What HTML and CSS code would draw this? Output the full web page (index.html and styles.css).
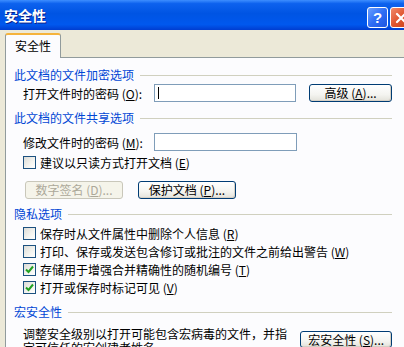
FILE: index.html
```html
<!DOCTYPE html>
<html lang="zh-CN">
<head>
  <meta charset="UTF-8" />
  <title>安全性</title>
  <link rel="stylesheet" href="styles.css">
</head>
<body>

  <div class="window">
    <div class="titlebar">
      <span class="caption">安全性</span>
      <div class="caption-buttons">
        <div class="cap-btn help">?</div>
        <div class="cap-btn close">
          <svg width="14" height="14" viewBox="0 0 14 14"><path d="M3 3 L11 11 M11 3 L3 11" stroke="#fff" stroke-width="2.2" stroke-linecap="round"/></svg>
        </div>
      </div>
    </div>

    <div class="tabs">
      <div class="tab">安全性</div>
    </div>

    <div class="panel">
      <div class="content">

        <div class="group-title g1"><span>此文档的文件加密选项</span><i></i></div>
        <div class="field-row r1">
          <label>打开文件时的密码 (<u>O</u>):</label>
          <div class="textbox"><span class="caret"></span></div>
          <button class="btn adv">高级 (<u>A</u>)...</button>
        </div>

        <div class="group-title g2"><span>此文档的文件共享选项</span><i></i></div>
        <div class="field-row r2">
          <label>修改文件时的密码 (<u>M</u>):</label>
          <div class="textbox"></div>
        </div>
        <div class="check-row first">
          <span class="box"></span>建议以只读方式打开文档 (<u>E</u>)
        </div>
        <div class="button-row">
          <button class="btn disabled">数字签名 (<u>D</u>)...</button>
          <button class="btn">保护文档 (<u>P</u>)...</button>
        </div>

        <div class="group-title g3"><span>隐私选项</span><i></i></div>
        <div class="check-list">
          <div class="check-row"><span class="box"></span>保存时从文件属性中删除个人信息 (<u>R</u>)</div>
          <div class="check-row"><span class="box"></span>打印、保存或发送包含修订或批注的文件之前给出警告 (<u>W</u>)</div>
          <div class="check-row"><span class="box checked"><svg width="9" height="9" viewBox="0 0 9 9"><path d="M1 4.5 L3.5 7 L8 1.5" fill="none" stroke="#21a121" stroke-width="2"/></svg></span>存储用于增强合并精确性的随机编号 (<u>T</u>)</div>
          <div class="check-row"><span class="box checked"><svg width="9" height="9" viewBox="0 0 9 9"><path d="M1 4.5 L3.5 7 L8 1.5" fill="none" stroke="#21a121" stroke-width="2"/></svg></span>打开或保存时标记可见 (<u>V</u>)</div>
        </div>

        <div class="group-title g4"><span>宏安全性</span><i></i></div>
        <div class="macro-row">
          <p>调整安全级别以打开可能包含宏病毒的文件，并指定可信任的宏创建者姓名。</p>
          <button class="btn macro">宏安全性 (<u>S</u>)...</button>
        </div>

      </div>
    </div>
  </div>

</body>
</html>
```

FILE: styles.css
```css
body {
  margin: 0;
  background-color: #ece9d8;
  font-family: "Noto Sans CJK SC", "Liberation Sans", sans-serif;
  font-size: 12px;
  color: #000;
  overflow: hidden;
}

.window {
  width: 430px;
  height: 347px;
  overflow: hidden;
}

/* 标题栏 */
.titlebar {
  height: 30px;
  background: linear-gradient(180deg, #3d8eff 0%, #0d62ee 12%, #0054e3 45%, #0058ee 82%, #003dd0 100%);
  display: flex;
  align-items: center;
  padding-left: 4px;
}

.caption {
  color: white;
  font-weight: bold;
  font-size: 14px;
  line-height: 16px;
  text-shadow: 1px 1px 0 #0a1e8a;
  flex-grow: 1;
}

.caption-buttons {
  display: flex;
  gap: 2px;
  margin-right: 19px;
  margin-top: 5px;
}

.cap-btn {
  width: 19px;
  height: 19px;
  border: 1px solid #fff;
  border-radius: 3px;
  display: flex;
  align-items: center;
  justify-content: center;
  color: white;
  font-family: "Liberation Sans", sans-serif;
  font-weight: bold;
  font-size: 15px;
}

.help {
  background: linear-gradient(135deg, #6aa0ff 0%, #2f6ef5 50%, #1d55e0 100%);
}

.close {
  background: linear-gradient(135deg, #f08a6a 0%, #e0552f 50%, #c8401c 100%);
}

/* 选项卡 */
.tabs {
  height: 27px;
  padding-left: 5px;
  display: flex;
  align-items: flex-end;
}

.tab {
  width: 54px;
  height: 23px;
  background: #fcfcfe;
  border: 1px solid #919b9c;
  border-bottom: none;
  border-top: 2px solid #f5b33c;
  border-radius: 3px 3px 0 0;
  line-height: 22px;
  text-align: center;
  position: relative;
  top: 1px;
}

.panel {
  margin-left: 5px;
  background: #fcfcfe;
  border: 1px solid #919b9c;
  height: 400px;
  padding: 9px 0 0 8px;
}

.content {
  width: 378px;
}

/* 分组标题 */
.group-title {
  display: flex;
  align-items: center;
  height: 16px;
  line-height: 16px;
  color: #0046d5;
}

.group-title i {
  flex-grow: 1;
  height: 1px;
  background: #d0d0bf;
  margin-left: 6px;
}

.g2 { margin-top: 8px; }
.g3 { margin-top: 7px; }
.g4 { margin-top: 8px; }

.field-row {
  display: flex;
  align-items: center;
  padding-left: 9px;
  height: 18px;
}

.r1 { margin-top: 1px; }
.r2 { margin-top: 7px; }

.field-row label {
  width: 131px;
}

.textbox {
  width: 141px;
  height: 16px;
  background: white;
  border: 1px solid #7f9db9;
  position: relative;
}

.caret {
  position: absolute;
  left: 3px;
  top: 2px;
  width: 1px;
  height: 12px;
  background: #000;
}

/* 按钮 */
.btn {
  font-family: inherit;
  font-size: 12px;
  height: 18px;
  padding: 0;
  line-height: 14px;
  border: 1px solid #003c74;
  border-radius: 3px;
  background: linear-gradient(180deg, #ffffff 0%, #f4f4f0 60%, #e3e2da 100%);
  box-shadow: inset -1px -1px 0 #d6d0c5;
  color: #000;
}

.btn.adv {
  width: 83px;
  margin-left: 13px;
}

.btn.disabled {
  border-color: #c9c7ba;
  background: #f5f4ea;
  box-shadow: none;
  color: #aca899;
}

.button-row {
  display: flex;
  gap: 15px;
  margin-top: 11px;
  padding-left: 11px;
}

.button-row .btn {
  width: 98px;
}

/* 复选框 */
.check-row {
  display: flex;
  align-items: center;
  height: 18px;
  padding-left: 9px;
}

.check-row.first {
  height: 16px;
  margin-top: 3px;
}

.check-list {
  margin-top: 2px;
}

.box {
  width: 11px;
  height: 11px;
  border: 1px solid #1c5180;
  background: linear-gradient(135deg, #dcdcd7 0%, #f4f4f0 60%, #ffffff 100%);
  margin-right: 4px;
  display: flex;
  align-items: center;
  justify-content: center;
}

/* 宏安全性 */
.macro-row {
  display: flex;
  align-items: flex-start;
  margin-top: 7px;
  padding-left: 9px;
}

.macro-row p {
  margin: 0;
  width: 270px;
  line-height: 14px;
}

.btn.macro {
  width: 92px;
  margin-left: 8px;
  margin-top: 4px;
  height: 17px;
}
```
